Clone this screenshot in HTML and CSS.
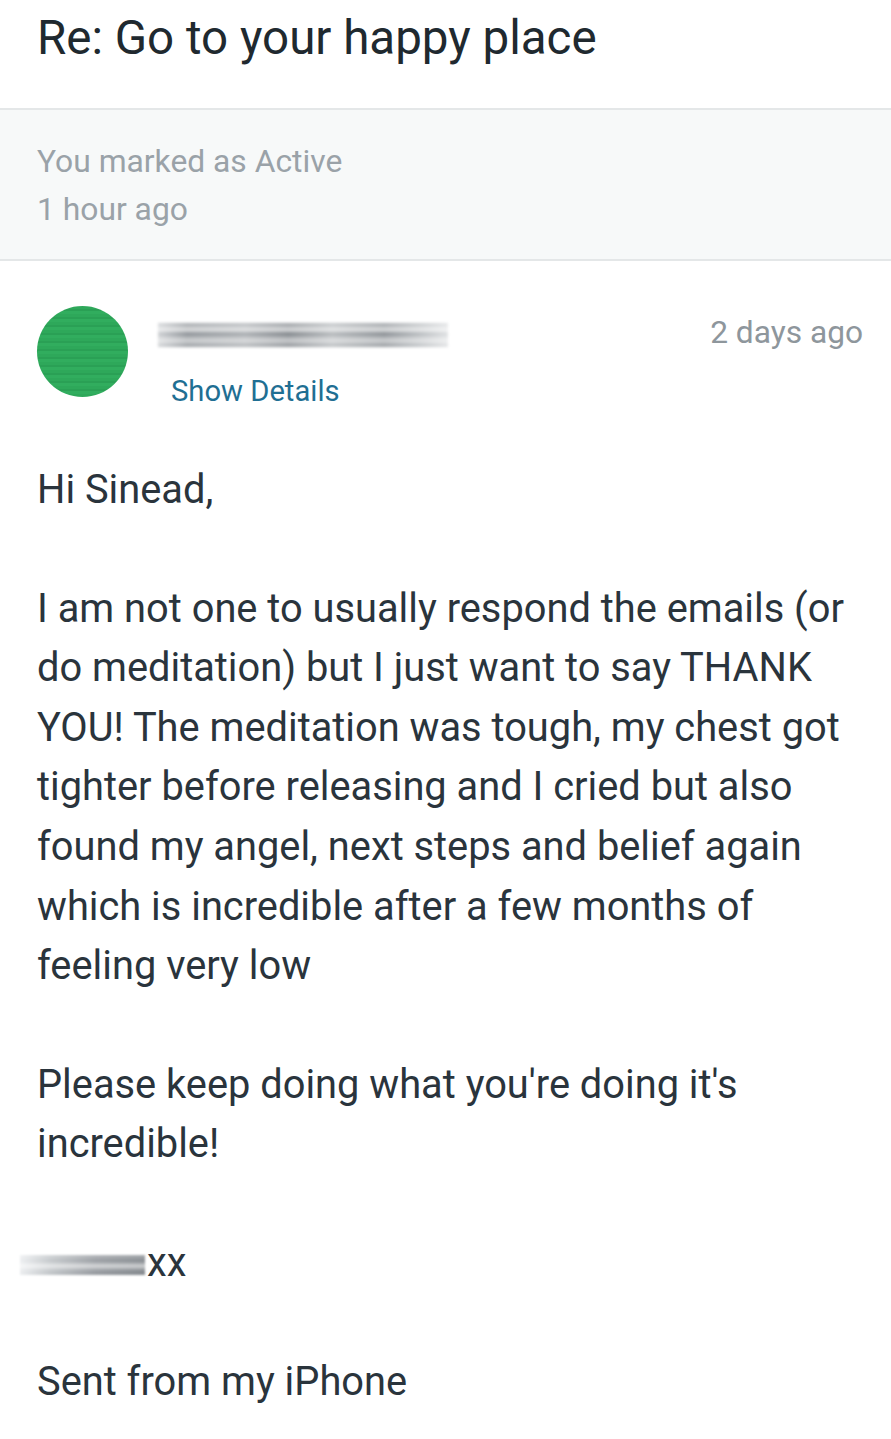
FILE: index.html
```
<!DOCTYPE html>
<html lang="en">
<head>
<meta charset="utf-8">
<title>Re: Go to your happy place</title>
<link rel="stylesheet" href="styles.css">
</head>
<body>
<div class="page">
  <header class="subject">
    <h1 class="subject-title">Re: Go to your happy place</h1>
  </header>
  <section class="status">
    <div class="status-line">You marked as Active</div>
    <div class="status-line">1 hour ago</div>
  </section>
  <section class="message">
    <div class="sender">
      <div class="avatar"></div>
      <div class="sender-info">
        <div class="sender-name"></div>
        <a class="show-details" href="#">Show Details</a>
      </div>
      <div class="sent-time">2 days ago</div>
    </div>
    <div class="body">
      <p class="para">Hi Sinead,</p>
      <p class="para">I am not one to usually respond the emails (or do meditation) but I just want to say THANK YOU! The meditation was tough, my chest got tighter before releasing and I cried but also found my angel, next steps and belief again which is incredible after a few months of feeling very low</p>
      <p class="para">Please keep doing what you're doing it's incredible!</p>
      <p class="para sign"><span class="sign-name"></span>xx</p>
      <p class="para">Sent from my iPhone</p>
    </div>
  </section>
</div>
</body>
</html>
```
FILE: styles.css
```
html, body {
  margin: 0;
  padding: 0;
  background: #ffffff;
}
body {
  font-family: Roboto, "Liberation Sans", Arial, sans-serif;
  color: #2a343c;
}
.page {
  width: 891px;
}
.subject {
  height: 108px;
  border-bottom: 2px solid #e4e7e8;
}
.subject-title {
  margin: 0;
  padding: 9px 0 0 37px;
  font-size: 47.5px;
  font-weight: 400;
  line-height: 58px;
  color: #20292f;
}
.status {
  background: #f7f9f9;
  border-bottom: 2px solid #e4e7e8;
  height: 151px;
  padding: 27px 37px 0;
  box-sizing: border-box;
}
.status-line {
  font-size: 31.8px;
  line-height: 48px;
  color: #9aa2a8;
}
.message {
  padding: 0 28px 0 37px;
}
.sender {
  display: flex;
  align-items: flex-start;
  padding-top: 45px;
}
.avatar {
  width: 91px;
  height: 91px;
  border-radius: 50%;
  background: repeating-linear-gradient(180deg, #2ea85a 0 3px, #2aa055 3px 5px, #31ad5e 5px 8px);
  flex: none;
}
.sender-info {
  display: flex;
  flex-direction: column;
  margin-left: 30px;
  flex: 1;
}
.sender-name {
  margin-top: 17px;
  width: 290px;
  height: 24px;
  background:
    linear-gradient(180deg, rgba(255,255,255,0.2) 0, rgba(255,255,255,0.7) 30%, rgba(255,255,255,0) 45%, rgba(255,255,255,0.6) 72%, rgba(255,255,255,0.1) 100%),
    linear-gradient(90deg, #c9cccf 0, #8a8f94 10%, #a6aaae 30%, #7d8287 45%, #b1b5b8 60%, #868b90 78%, #bcc0c3 92%, #dcdee0 100%);
  filter: blur(1.5px);
}
.show-details {
  margin-top: 26px;
  margin-left: 13px;
  font-size: 29.2px;
  line-height: 36px;
  color: #1f6f93;
  text-decoration: none;
}
.sent-time {
  margin-top: 7px;
  font-size: 31.7px;
  line-height: 40px;
  color: #8e969c;
}
.body {
  padding-top: 51px;
}
.para {
  margin: 0 0 59px;
  font-size: 39.8px;
  line-height: 59.6px;
  color: #2a343c;
}
.sign {
  margin-left: -17px;
  display: flex;
  align-items: center;
}
.sign-name {
  display: inline-block;
  width: 125px;
  height: 20px;
  margin-top: 4px;
  margin-right: 2px;
  background:
    linear-gradient(180deg, rgba(255,255,255,0.3) 0, rgba(255,255,255,0) 30%, rgba(255,255,255,0.6) 55%, rgba(255,255,255,0) 80%),
    linear-gradient(90deg, #eceef0 0, #c3c7ca 25%, #9a9ea3 60%, #868b90 100%);
  filter: blur(1.2px);
}
```
